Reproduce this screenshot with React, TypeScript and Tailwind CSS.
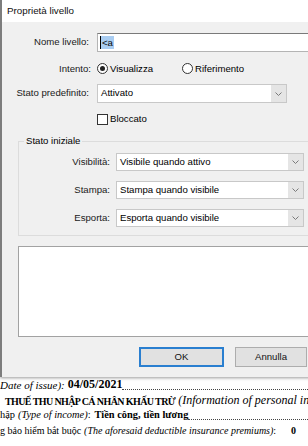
const Chevron = () => (
  <svg width="7" height="4" viewBox="0 0 7 4">
    <path d="M0.5 0.5 L3.5 3.5 L6.5 0.5" fill="none" stroke="#7a7a7a" strokeWidth="1" />
  </svg>
);

const Select = ({ value, className }: { value: string; className: string }) => (
  <div className={`flex border border-[#c8c8c8] bg-white ${className}`}>
    <span className="flex flex-1 items-center pl-[3px] text-black">{value}</span>
    <span className="flex w-[15px] items-center justify-center bg-[#e5e5e5]">
      <Chevron />
    </span>
  </div>
);

const Label = ({ text, className }: { text: string; className: string }) => (
  <span className={`shrink-0 text-right text-[#1a1a1a] ${className}`}>{text}</span>
);

const Leader = () => <span className="mb-[3px] flex-1 self-end border-b border-dotted border-[#444]" />;

export default function App() {
  return (
    <div className="flex h-[446px] w-[308px] flex-col overflow-hidden bg-white">
      {/* dialog */}
      <div className="relative z-10 flex h-[377px] w-[340px] shrink-0 flex-col border-l-2 border-[#7d7d7d] shadow-[0_1px_3px_rgba(0,0,0,0.4)] font-['Liberation_Sans',Arial,sans-serif] text-[9.6px]">
        <div className="flex h-[22px] items-center bg-white pl-[5px] text-[9.8px] text-[#111]">Proprietà livello</div>

        <div className="flex flex-1 flex-col bg-[#f0f0f0]">
          <div className="mt-[11px] flex h-[19px] items-center">
            <Label text="Nome livello:" className="w-[87px]" />
            <div className="ml-[8px] flex h-full w-[240px] items-center border border-[#b4b4b4] border-t-[#7a7a7a] bg-white pl-[2px]">
              <span className="h-[13px] w-px bg-black" />
              <span className="bg-[#a9cdf2] px-px leading-[13px] text-[#0a0a0a]">&lt;a</span>
            </div>
          </div>

          <div className="mt-[9px] flex h-[16px] items-center">
            <Label text="Intento:" className="w-[89px]" />
            <div className="ml-[6px] flex items-center gap-[2px]">
              <span className="flex h-[11px] w-[11px] items-center justify-center rounded-full border border-[#333] bg-white">
                <span className="h-[5px] w-[5px] rounded-full bg-[#222]" />
              </span>
              <span>Visualizza</span>
            </div>
            <div className="ml-[29px] flex items-center gap-[2px]">
              <span className="h-[11px] w-[11px] rounded-full border border-[#333] bg-white" />
              <span>Riferimento</span>
            </div>
          </div>

          <div className="mt-[7px] flex h-[19px] items-center">
            <Label text="Stato predefinito:" className="w-[87px]" />
            <Select value="Attivato" className="ml-[8px] h-full w-[190px]" />
          </div>

          <div className="mt-[9px] flex h-[14px] items-center gap-[2px] pl-[95px]">
            <span className="h-[11px] w-[11px] border border-[#333] bg-white" />
            <span>Bloccato</span>
          </div>

          {/* group box */}
          <div className="relative ml-[16px] mt-[15px] flex w-[330px] flex-col gap-[10px] border border-[#dcdcdc] pb-[8px] pt-[11px]">
            <span className="absolute left-[5px] top-[-7px] bg-[#f0f0f0] px-[2px] leading-[12px]">Stato iniziale</span>
            <div className="flex h-[18px] items-center">
              <Label text="Visibilità:" className="w-[91px]" />
              <Select value="Visibile quando attivo" className="ml-[6px] h-full w-[188px]" />
            </div>
            <div className="flex h-[18px] items-center">
              <Label text="Stampa:" className="w-[91px]" />
              <Select value="Stampa quando visibile" className="ml-[6px] h-full w-[188px]" />
            </div>
            <div className="flex h-[18px] items-center">
              <Label text="Esporta:" className="w-[91px]" />
              <Select value="Esporta quando visibile" className="ml-[6px] h-full w-[188px]" />
            </div>
          </div>

          <div className="ml-[16px] mt-[10px] h-[91px] w-[330px] border border-[#a2a2a2] bg-white" />

          <div className="mt-[10px] flex h-[20px]">
            <button className="ml-[137px] w-[85px] border-2 border-[#2a7fd0] bg-[#e1e1e1] text-[#111]">OK</button>
            <button className="ml-[11px] w-[72px] border border-[#adadad] bg-[#e1e1e1] text-[#111]">Annulla</button>
          </div>
        </div>
      </div>

      {/* document behind the dialog */}
      <div className="flex flex-col whitespace-nowrap font-['Liberation_Serif','Times_New_Roman',serif] text-black">
        <div className="flex h-[18px] items-end pb-[2px] text-[11px]">
          <span className="italic">Date of issue):</span>
          <span className="ml-[3px] text-[12px] font-bold">04/05/2021</span>
          <Leader />
        </div>
        <div className="flex h-[15px] items-end pb-[1px] pl-[5px]">
          <span className="text-[10px] font-bold tracking-[-0.6px]">THUẾ THU NHẬP CÁ NHÂN KHẤU TRỪ</span>
          <span className="ml-[3px] text-[12px] italic">(Information of personal income)</span>
        </div>
        <div className="flex h-[14px] items-end pb-[1px] text-[10.4px]">
          <span>hập</span>
          <span className="ml-[3px] italic">(Type of income)</span>
          <span>:</span>
          <span className="ml-[4px] font-bold">Tiền công, tiền lương</span>
          <Leader />
        </div>
        <div className="flex h-[15px] items-end pb-[1px] text-[10px]">
          <span>g bảo hiểm bắt buộc</span>
          <span className="ml-[3px] italic">(The aforesaid deductible insurance premiums)</span>
          <span>:</span>
          <span className="ml-[15px] font-bold">0</span>
        </div>
      </div>
    </div>
  );
}
